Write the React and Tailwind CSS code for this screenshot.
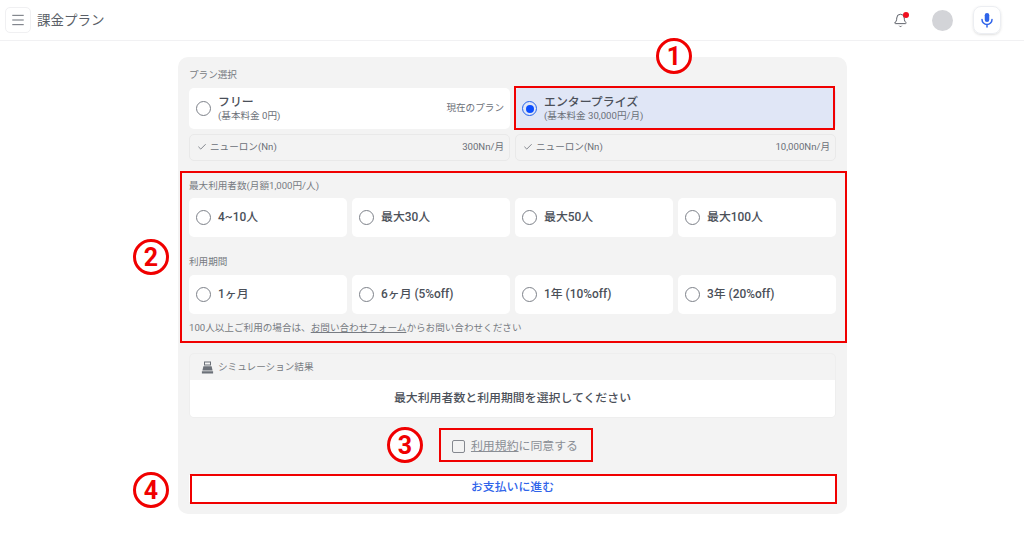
import React from "react";
import { Menu, Bell, Check } from "lucide-react";

function Radio({ on }) {
  if (on) {
    return (
      <span className="w-[15px] h-[15px] shrink-0 rounded-full border-[1.5px] border-[#2563eb] flex items-center justify-center">
        <span className="w-[8px] h-[8px] rounded-full bg-[#0b4dff]" />
      </span>
    );
  }
  return <span className="w-[15px] h-[15px] shrink-0 rounded-full border-[1.5px] border-[#7d8189]" />;
}

function Option({ label }) {
  return (
    <div className="h-[39px] bg-white rounded-[5px] flex items-center pl-[7px] gap-[7px]">
      <Radio />
      <span className="text-[11.9px] font-medium text-[#4b5059]">{label}</span>
    </div>
  );
}

function Feature({ right }) {
  return (
    <div className="h-[27px] border border-[#e9e9e9] rounded-[5px] flex items-center justify-between pl-[7px] pr-[5px] text-[9.6px] text-[#6b7078]">
      <span className="flex items-center gap-[3px]">
        <Check size={10} strokeWidth={2} />
        ニューロン(Nn)
      </span>
      <span>{right}</span>
    </div>
  );
}

function RedBox({ className }) {
  return <div className={`absolute border-2 border-[#f00000] ${className}`} />;
}

function Badge({ n, className }) {
  return (
    <div className={`absolute w-[36px] h-[36px] rounded-full border-[3px] border-[#f00000] bg-white flex items-center justify-center text-[#f00000] text-[25px] font-bold leading-none ${className}`}>
      {n}
    </div>
  );
}

export default function App() {
  return (
    <div className="relative w-[1024px] h-[560px] bg-white overflow-hidden font-['Roboto','Noto_Sans_CJK_JP',sans-serif]">
      <header className="h-[41px] border-b border-[#f1f1f3] flex items-center pl-[5px] pr-[23px]">
        <div className="w-[26px] h-[26px] rounded-[5px] border border-[#f0f0f2] flex items-center justify-center text-[#6b7078]">
          <Menu size={16} strokeWidth={1.5} />
        </div>
        <h1 className="ml-[6px] text-[13.5px] text-[#5a5f68]">課金プラン</h1>
        <div className="ml-auto flex items-center">
          <div className="relative text-[#5f636b]">
            <Bell size={15} strokeWidth={1.6} />
            <span className="absolute top-[-1px] right-[-1px] w-[6px] h-[6px] rounded-full bg-[#f01020]" />
          </div>
          <div className="ml-[24px] w-[21px] h-[21px] rounded-full bg-[#d3d4d8]" />
          <div className="ml-[20px] w-[28px] h-[28px] rounded-[8px] border border-[#eceef2] shadow-sm flex items-center justify-center">
            <svg width="16" height="16" viewBox="0 0 16 16" fill="none" stroke="#2f64ea" strokeWidth="1.5" strokeLinecap="round">
              <rect x="5.75" y="1" width="4.5" height="9" rx="2.25" fill="#2f64ea" stroke="none" />
              <path d="M3 7.5a5 5 0 0 0 10 0M8 12.5V15" />
            </svg>
          </div>
        </div>
      </header>

      <main className="w-[669px] h-[457px] mt-[16px] ml-[178px] bg-[#f3f3f3] rounded-[10px] px-[11px] pt-[12px]">
        <p className="text-[9.6px] leading-[12px] text-[#777b82]">プラン選択</p>
        <div className="mt-[7px] grid grid-cols-2 gap-[5px]">
          <div className="h-[41px] bg-white rounded-[5px] flex items-center pl-[7px] pr-[6px] gap-[7px]">
            <Radio />
            <div className="flex-1">
              <p className="text-[11.9px] leading-[14px] font-medium text-[#4b5059]">フリー</p>
              <p className="text-[9.6px] leading-[13px] text-[#6b7078]">(基本料金 0円)</p>
            </div>
            <span className="text-[9.6px] text-[#6b7078]">現在のプラン</span>
          </div>
          <div className="h-[41px] bg-[#e0e6f6] rounded-[5px] flex items-center pl-[7px] gap-[7px]">
            <Radio on />
            <div>
              <p className="text-[11.9px] leading-[14px] font-medium text-[#4b5059]">エンタープライズ</p>
              <p className="text-[9.6px] leading-[13px] text-[#6b7078]">(基本料金 30,000円/月)</p>
            </div>
          </div>
        </div>
        <div className="mt-[5px] grid grid-cols-2 gap-[5px]">
          <Feature right="300Nn/月" />
          <Feature right="10,000Nn/月" />
        </div>

        <p className="mt-[19px] text-[9.6px] leading-[12px] text-[#777b82]">最大利用者数(月額1,000円/人)</p>
        <div className="mt-[6px] grid grid-cols-4 gap-[5px]">
          {["4~10人", "最大30人", "最大50人", "最大100人"].map((t) => (
            <Option key={t} label={t} />
          ))}
        </div>

        <p className="mt-[19px] text-[9.6px] leading-[12px] text-[#777b82]">利用期間</p>
        <div className="mt-[7px] grid grid-cols-4 gap-[5px]">
          {["1ヶ月", "6ヶ月 (5%off)", "1年 (10%off)", "3年 (20%off)"].map((t) => (
            <Option key={t} label={t} />
          ))}
        </div>
        <p className="mt-[8px] text-[9.6px] leading-[12px] text-[#777b82]">
          100人以上ご利用の場合は、<span className="underline">お問い合わせフォーム</span>からお問い合わせください
        </p>

        <section className="mt-[19px] h-[65px] border border-[#eeeeee] rounded-[5px] overflow-hidden flex flex-col">
          <div className="h-[26px] flex items-center pl-[11px] gap-[4px] text-[9.6px] text-[#777b82]">
            <svg width="13" height="13" viewBox="0 0 13 13" fill="#6b7078">
              <path fillRule="evenodd" d="M3 .5h7v4H3zM4 1.5v2h5v-2zM2.4 5.2h8.2l1 4.3H1.4zM.9 10.2h11.2v2.3H.9z" />
            </svg>
            シミュレーション結果
          </div>
          <div className="flex-1 bg-white flex items-center justify-center text-[11.9px] font-medium text-[#4b5059]">
            最大利用者数と利用期間を選択してください
          </div>
        </section>

        <div className="mt-[20px] pl-[5px] flex items-center justify-center gap-[6px] text-[11.9px] text-[#8a8e95]">
          <span className="w-[13px] h-[13px] rounded-[2px] border-[1.5px] border-[#85888f]" />
          <span>
            <span className="underline">利用規約</span>に同意する
          </span>
        </div>

        <button className="mt-[19px] w-full h-[27px] bg-white text-[11.9px] font-medium text-[#2f64ea]">
          お支払いに進む
        </button>
      </main>

      <RedBox className="left-[514px] top-[86px] w-[321px] h-[44px]" />
      <RedBox className="left-[180px] top-[171px] w-[667px] h-[172px]" />
      <RedBox className="left-[439px] top-[428px] w-[154px] h-[34px]" />
      <RedBox className="left-[190px] top-[474px] w-[647px] h-[30px]" />

      <Badge n="1" className="left-[656px] top-[38px]" />
      <Badge n="2" className="left-[133px] top-[239px]" />
      <Badge n="3" className="left-[387px] top-[427px]" />
      <Badge n="4" className="left-[133px] top-[472px]" />
    </div>
  );
}
